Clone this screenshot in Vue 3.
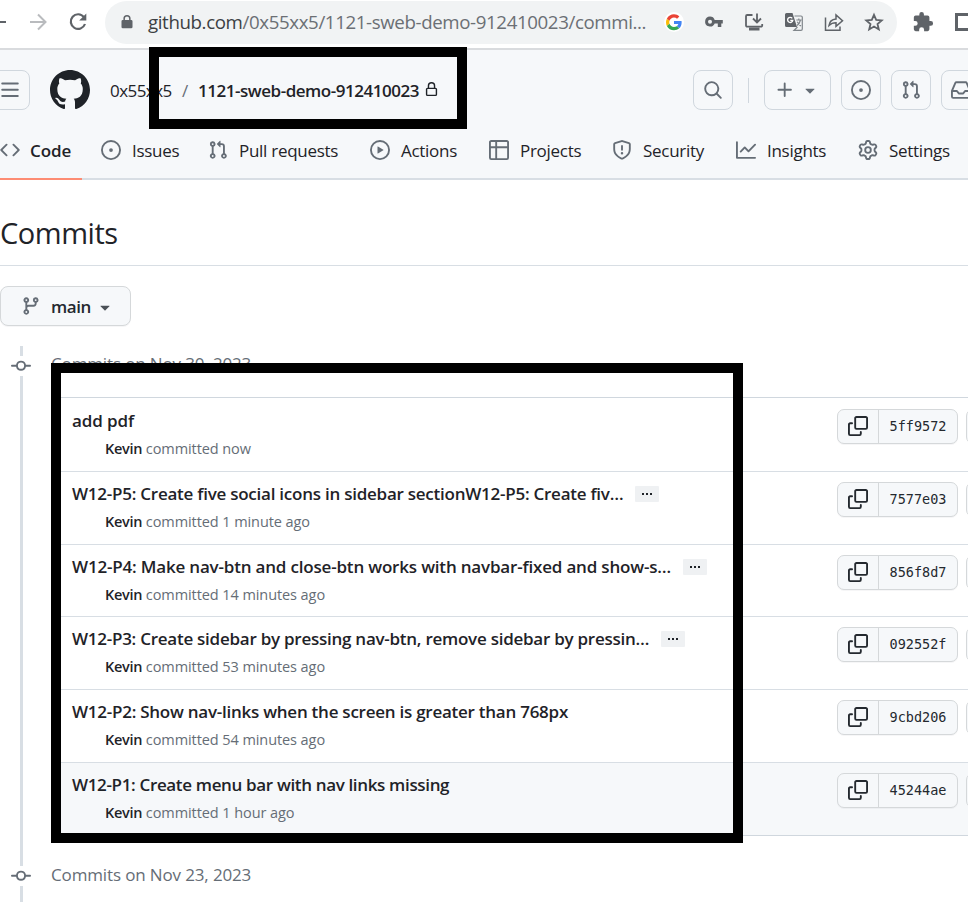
<script setup>
const icons = {
  code: 'm11.28 3.22 4.25 4.25a.75.75 0 0 1 0 1.06l-4.25 4.25a.749.749 0 0 1-1.275-.326.749.749 0 0 1 .215-.734L13.94 8l-3.72-3.72a.749.749 0 0 1 .326-1.275.749.749 0 0 1 .734.215Zm-6.56 0a.751.751 0 0 1 1.042.018.751.751 0 0 1 .018 1.042L2.06 8l3.72 3.72a.749.749 0 0 1-.326 1.275.749.749 0 0 1-.734-.215L.47 8.53a.75.75 0 0 1 0-1.06Z',
  issue: 'M8 9.5a1.5 1.5 0 1 0 0-3 1.5 1.5 0 0 0 0 3Z M8 0a8 8 0 1 1 0 16A8 8 0 0 1 8 0ZM1.5 8a6.5 6.5 0 1 0 13 0 6.5 6.5 0 0 0-13 0Z',
  pull: 'M1.5 3.25a2.25 2.25 0 1 1 3 2.122v5.256a2.251 2.251 0 1 1-1.5 0V5.372A2.25 2.25 0 0 1 1.5 3.25Zm5.677-.177L9.573.677A.25.25 0 0 1 10 .854V2.5h1A2.5 2.5 0 0 1 13.5 5v5.628a2.251 2.251 0 1 1-1.5 0V5a1 1 0 0 0-1-1h-1v1.646a.25.25 0 0 1-.427.177L7.177 3.427a.25.25 0 0 1 0-.354ZM3.75 2.5a.75.75 0 1 0 0 1.5.75.75 0 0 0 0-1.5Zm0 9.5a.75.75 0 1 0 0 1.5.75.75 0 0 0 0-1.5Zm8.25.75a.75.75 0 1 0 1.5 0 .75.75 0 0 0-1.5 0Z',
  play: 'M8 0a8 8 0 1 1 0 16A8 8 0 0 1 8 0ZM1.5 8a6.5 6.5 0 1 0 13 0 6.5 6.5 0 0 0-13 0Zm4.879-2.773 4.264 2.559a.25.25 0 0 1 0 .428l-4.264 2.559A.25.25 0 0 1 6 10.559V5.442a.25.25 0 0 1 .379-.215Z',
  table: 'M0 1.75C0 .784.784 0 1.75 0h12.5C15.216 0 16 .784 16 1.75v12.5A1.75 1.75 0 0 1 14.25 16H1.75A1.75 1.75 0 0 1 0 14.25ZM6.5 6.5v8h7.75a.25.25 0 0 0 .25-.25V6.5Zm8-1.5V1.75a.25.25 0 0 0-.25-.25H6.5V5Zm-13 1.5v7.75c0 .138.112.25.25.25H5v-8ZM5 5V1.5H1.75a.25.25 0 0 0-.25.25V5Z',
  shield: 'M7.467.133a1.748 1.748 0 0 1 1.066 0l5.25 1.68A1.75 1.75 0 0 1 15 3.48V7c0 1.566-.32 3.182-1.303 4.682-.983 1.498-2.585 2.813-5.032 3.855a1.697 1.697 0 0 1-1.33 0c-2.447-1.042-4.049-2.357-5.032-3.855C1.32 10.182 1 8.566 1 7V3.48a1.75 1.75 0 0 1 1.217-1.667Zm.61 1.429a.25.25 0 0 0-.153 0l-5.25 1.68a.25.25 0 0 0-.174.238V7c0 1.358.275 2.666 1.057 3.86.784 1.194 2.121 2.34 4.366 3.297a.196.196 0 0 0 .154 0c2.245-.956 3.582-2.104 4.366-3.298C13.225 9.666 13.5 8.36 13.5 7V3.48a.251.251 0 0 0-.174-.237l-5.25-1.68ZM8.75 4.75v3a.75.75 0 0 1-1.5 0v-3a.75.75 0 0 1 1.5 0ZM9 10.5a1 1 0 1 1-2 0 1 1 0 0 1 2 0Z',
  graph: 'M1.5 1.75V13.5h13.75a.75.75 0 0 1 0 1.5H.75a.75.75 0 0 1-.75-.75V1.75a.75.75 0 0 1 1.5 0Zm14.28 2.53-5.25 5.25a.75.75 0 0 1-1.06 0L7 7.06 4.28 9.78a.751.751 0 0 1-1.042-.018.751.751 0 0 1-.018-1.042l3.25-3.25a.75.75 0 0 1 1.06 0L10 7.94l4.72-4.72a.751.751 0 0 1 1.042.018.751.751 0 0 1 .018 1.042Z',
  gear: 'M8 0a8.2 8.2 0 0 1 .701.031C9.444.095 9.99.645 10.16 1.29l.288 1.107c.018.066.079.158.212.224.231.114.454.243.668.386.123.082.233.09.299.071l1.103-.303c.644-.176 1.392.021 1.82.63.27.385.506.792.704 1.218.315.675.111 1.422-.364 1.891l-.814.806c-.049.048-.098.147-.088.294.016.257.016.515 0 .772-.01.147.038.246.088.294l.814.806c.475.469.679 1.216.364 1.891a7.977 7.977 0 0 1-.704 1.217c-.428.61-1.176.807-1.82.63l-1.102-.302c-.067-.019-.177-.011-.3.071a5.909 5.909 0 0 1-.668.386c-.133.066-.194.158-.211.224l-.29 1.106c-.168.646-.715 1.196-1.458 1.26a8.006 8.006 0 0 1-1.402 0c-.743-.064-1.289-.614-1.458-1.26l-.289-1.106c-.018-.066-.079-.158-.212-.224a5.738 5.738 0 0 1-.668-.386c-.123-.082-.233-.09-.299-.071l-1.103.303c-.644.176-1.392-.021-1.82-.63a8.12 8.12 0 0 1-.704-1.218c-.315-.675-.111-1.422.363-1.891l.815-.806c.05-.048.098-.147.088-.294a6.214 6.214 0 0 1 0-.772c.01-.147-.038-.246-.088-.294l-.815-.806C.635 6.045.431 5.298.746 4.623a7.92 7.92 0 0 1 .704-1.217c.428-.61 1.176-.807 1.82-.63l1.102.302c.067.019.177.011.3-.071.214-.143.437-.272.668-.386.133-.066.194-.158.211-.224l.29-1.106C6.009.645 6.556.095 7.299.03 7.53.01 7.764 0 8 0Zm-.571 1.525c-.036.003-.108.036-.137.146l-.289 1.105c-.147.561-.549.967-.998 1.189-.173.086-.34.183-.5.29-.417.278-.97.423-1.529.27l-1.103-.303c-.109-.03-.175.016-.195.045-.22.312-.412.644-.573.99-.014.031-.021.11.059.19l.815.806c.411.406.562.957.53 1.456a4.709 4.709 0 0 0 0 .582c.032.499-.119 1.05-.53 1.456l-.815.806c-.081.08-.073.159-.059.19.162.346.353.677.573.989.02.03.085.076.195.046l1.102-.303c.56-.153 1.113-.008 1.53.27.161.107.328.204.501.29.447.222.85.629.997 1.189l.289 1.105c.029.109.101.143.137.146a6.6 6.6 0 0 0 1.142 0c.036-.003.108-.036.137-.146l.289-1.105c.147-.561.549-.967.998-1.189.173-.086.34-.183.5-.29.417-.278.97-.423 1.529-.27l1.103.303c.109.029.175-.016.195-.045.22-.313.411-.644.573-.99.014-.031.021-.11-.059-.19l-.815-.806c-.411-.406-.562-.957-.53-1.456a4.709 4.709 0 0 0 0-.582c-.032-.499.119-1.05.53-1.456l.815-.806c.081-.08.073-.159.059-.19a6.464 6.464 0 0 0-.573-.989c-.02-.03-.085-.076-.195-.046l-1.102.303c-.56.153-1.113.008-1.53-.27a4.44 4.44 0 0 0-.501-.29c-.447-.222-.85-.629-.997-1.189l-.289-1.105c-.029-.11-.101-.143-.137-.146a6.6 6.6 0 0 0-1.142 0ZM11 8a3 3 0 1 1-6 0 3 3 0 0 1 6 0ZM9.5 8a1.5 1.5 0 1 0-3.001.001A1.5 1.5 0 0 0 9.5 8Z',
  search: 'M10.68 11.74a6 6 0 0 1-7.922-8.982 6 6 0 0 1 8.982 7.922l3.04 3.04a.749.749 0 0 1-.326 1.275.749.749 0 0 1-.734-.215ZM11.5 7a4.499 4.499 0 1 0-8.997 0A4.499 4.499 0 0 0 11.5 7Z',
  plus: 'M7.75 2a.75.75 0 0 1 .75.75V7h4.25a.75.75 0 0 1 0 1.5H8.5v4.25a.75.75 0 0 1-1.5 0V8.5H2.75a.75.75 0 0 1 0-1.5H7V2.75A.75.75 0 0 1 7.75 2Z',
  caret: 'm4.427 7.427 3.396 3.396a.25.25 0 0 0 .354 0l3.396-3.396A.25.25 0 0 0 11.396 7H4.604a.25.25 0 0 0-.177.427Z',
  inbox: 'M2.8 2.06A1.75 1.75 0 0 1 4.41 1h7.18c.7 0 1.333.417 1.61 1.06l2.74 6.395c.04.093.06.194.06.295v4.5A1.75 1.75 0 0 1 14.25 15H1.75A1.75 1.75 0 0 1 0 13.25v-4.5c0-.101.02-.202.06-.295Zm1.61.44a.25.25 0 0 0-.23.152L1.887 8H4.75a.75.75 0 0 1 .6.3L6.625 10h2.75l1.275-1.7a.75.75 0 0 1 .6-.3h2.863L11.82 2.652a.25.25 0 0 0-.23-.152Zm10.09 7h-2.875l-1.275 1.7a.75.75 0 0 1-.6.3h-3.5a.75.75 0 0 1-.6-.3L4.375 9.5H1.5v3.75c0 .138.112.25.25.25h12.5a.25.25 0 0 0 .25-.25Z',
  menu: 'M1 2.75A.75.75 0 0 1 1.75 2h12.5a.75.75 0 0 1 0 1.5H1.75A.75.75 0 0 1 1 2.75Zm0 5A.75.75 0 0 1 1.75 7h12.5a.75.75 0 0 1 0 1.5H1.75A.75.75 0 0 1 1 7.75ZM1.75 12h12.5a.75.75 0 0 1 0 1.5H1.75a.75.75 0 0 1 0-1.5Z',
  lock: 'M4 4a4 4 0 0 1 8 0v2h.25c.966 0 1.75.784 1.75 1.75v5.5A1.75 1.75 0 0 1 12.25 15h-8.5A1.75 1.75 0 0 1 2 13.25v-5.5C2 6.784 2.784 6 3.75 6H4Zm8.25 3.5h-8.5a.25.25 0 0 0-.25.25v5.5c0 .138.112.25.25.25h8.5a.25.25 0 0 0 .25-.25v-5.5a.25.25 0 0 0-.25-.25ZM10.5 6V4a2.5 2.5 0 1 0-5 0v2Z',
  mark: 'M8 0c4.42 0 8 3.58 8 8a8.013 8.013 0 0 1-5.45 7.59c-.4.08-.55-.17-.55-.38 0-.27.01-1.13.01-2.2 0-.75-.25-1.23-.54-1.48 1.78-.2 3.65-.88 3.65-3.95 0-.88-.31-1.59-.82-2.15.08-.2.36-1.02-.08-2.12 0 0-.67-.22-2.2.82-.64-.18-1.32-.27-2-.27-.68 0-1.36.09-2 .27-1.53-1.03-2.2-.82-2.2-.82-.44 1.1-.16 1.92-.08 2.12-.51.56-.82 1.28-.82 2.15 0 3.06 1.86 3.75 3.64 3.95-.23.2-.44.55-.51 1.07-.46.21-1.61.55-2.33-.66-.15-.24-.6-.83-1.23-.82-.67.01-.27.38.01.53.34.19.73.9.82 1.13.16.45.68 1.31 2.69.94 0 .67.01 1.3.01 1.49 0 .21-.15.45-.55.38A7.995 7.995 0 0 1 0 8c0-4.42 3.58-8 8-8Z',
  branch: 'M9.5 3.25a2.25 2.25 0 1 1 3 2.122V6A2.5 2.5 0 0 1 10 8.5H6a1 1 0 0 0-1 1v1.128a2.251 2.251 0 1 1-1.5 0V5.372a2.25 2.25 0 1 1 1.5 0v1.836A2.493 2.493 0 0 1 6 7h4a1 1 0 0 0 1-1v-.628A2.25 2.25 0 0 1 9.5 3.25Zm-6 0a.75.75 0 1 0 1.5 0 .75.75 0 0 0-1.5 0Zm8.25-.75a.75.75 0 1 0 0 1.5.75.75 0 0 0 0-1.5ZM4.25 12a.75.75 0 1 0 0 1.5.75.75 0 0 0 0-1.5Z',
  commit: 'M11.93 8.5a4.002 4.002 0 0 1-7.86 0H.75a.75.75 0 0 1 0-1.5h3.32a4.002 4.002 0 0 1 7.86 0h3.32a.75.75 0 0 1 0 1.5Zm-1.43-.75a2.5 2.5 0 1 0-5 0 2.5 2.5 0 0 0 5 0Z',
  copy: 'M0 6.75C0 5.784.784 5 1.75 5h1.5a.75.75 0 0 1 0 1.5h-1.5a.25.25 0 0 0-.25.25v7.5c0 .138.112.25.25.25h7.5a.25.25 0 0 0 .25-.25v-1.5a.75.75 0 0 1 1.5 0v1.5A1.75 1.75 0 0 1 9.25 16h-7.5A1.75 1.75 0 0 1 0 14.25Z M5 1.75C5 .784 5.784 0 6.75 0h7.5C15.216 0 16 .784 16 1.75v7.5A1.75 1.75 0 0 1 14.25 11h-7.5A1.75 1.75 0 0 1 5 9.25Zm1.75-.25a.25.25 0 0 0-.25.25v7.5c0 .138.112.25.25.25h7.5a.25.25 0 0 0 .25-.25v-7.5a.25.25 0 0 0-.25-.25Z',
}

const tabs = [
  { label: 'Code', icon: 'code', active: true },
  { label: 'Issues', icon: 'issue' },
  { label: 'Pull requests', icon: 'pull' },
  { label: 'Actions', icon: 'play' },
  { label: 'Projects', icon: 'table' },
  { label: 'Security', icon: 'shield' },
  { label: 'Insights', icon: 'graph' },
  { label: 'Settings', icon: 'gear' },
]

// tracking: letter spacing of the title, in px
const commits = [
  { title: 'add pdf', when: 'now', sha: '5ff9572', tracking: -0.1 },
  { title: 'W12-P5: Create five social icons in sidebar sectionW12-P5: Create fiv…', when: '1 minute ago', sha: '7577e03', more: true, tracking: -0.245 },
  { title: 'W12-P4: Make nav-btn and close-btn works with navbar-fixed and show-s…', when: '14 minutes ago', sha: '856f8d7', more: true, tracking: -0.185 },
  { title: 'W12-P3: Create sidebar by pressing nav-btn, remove sidebar by pressin…', when: '53 minutes ago', sha: '092552f', more: true, tracking: -0.255 },
  { title: 'W12-P2: Show nav-links when the screen is greater than 768px', when: '54 minutes ago', sha: '9cbd206', tracking: -0.25 },
  { title: 'W12-P1: Create menu bar with nav links missing', when: '1 hour ago', sha: '45244ae', hover: true, tracking: -0.345 },
]
</script>

<template>
  <div class="window">
    <div class="toolbar">
      <div class="nav-buttons">
        <svg class="back" width="20" height="20" viewBox="0 0 20 20"><path d="M2 10H18" /></svg>
        <svg class="forward" width="18" height="18" viewBox="0 0 18 18"><path d="M1 9H16M9 1.5 16.5 9 9 16.5" /></svg>
        <svg class="reload" width="20" height="20" viewBox="0 0 20 20"><path class="arc" d="M15.9 5.1A7.3 7.3 0 1 0 17 12" /><path d="M18.3 1.5V8.6H11.2Z" fill="#5f6368" /></svg>
      </div>
      <div class="address">
        <svg class="padlock" width="12" height="16" viewBox="0 0 12 16"><path fill="#5f6368" d="M6 1a3.6 3.6 0 0 0-3.6 3.6V6H1.8A1.3 1.3 0 0 0 .5 7.3V13a1.3 1.3 0 0 0 1.3 1.3h8.4A1.3 1.3 0 0 0 11.5 13V7.3A1.3 1.3 0 0 0 10.2 6h-.6V4.6A3.6 3.6 0 0 0 6 1Zm0 1.5a2.1 2.1 0 0 1 2.1 2.1V6H3.9V4.6A2.1 2.1 0 0 1 6 2.5Z" /></svg>
        <span class="url"><b>github.com</b>/0x55xx5/1121-sweb-demo-912410023/commi...</span>
        <div class="actions">
          <svg class="google" width="20" height="20" viewBox="0 0 20 20">
            <circle cx="10" cy="10" r="10" fill="#fff" />
            <g transform="translate(2 2.3) scale(.333)">
              <path fill="#4285F4" d="M46.98 24.55c0-1.57-.15-3.09-.38-4.55H24v9.02h12.94c-.58 2.96-2.26 5.48-4.78 7.18l7.73 6c4.51-4.18 7.09-10.36 7.09-17.65z" />
              <path fill="#FBBC05" d="M10.53 28.59A14.5 14.5 0 0 1 9.77 24c0-1.6.27-3.14.76-4.59l-7.98-6.19A23.9 23.9 0 0 0 0 24c0 3.88.92 7.54 2.56 10.78z" />
              <path fill="#34A853" d="M24 48c6.48 0 11.93-2.13 15.89-5.81l-7.73-6c-2.15 1.45-4.92 2.3-8.16 2.3-6.26 0-11.57-4.22-13.47-9.91l-7.98 6.19C6.51 42.62 14.62 48 24 48z" />
              <path fill="#EA4335" d="M24 9.5c3.54 0 6.71 1.22 9.21 3.6l6.85-6.85C35.9 2.38 30.47 0 24 0 14.62 0 6.51 5.38 2.56 13.22l7.98 6.19C12.43 13.72 17.74 9.5 24 9.5z" />
            </g>
          </svg>
          <svg width="20" height="20" viewBox="0 0 20 20"><path fill="#5f6368" fill-rule="evenodd" d="M6 4.5a5 5 0 0 1 4.7 3.4H18.8V11.5H17.3V15H13.8V11.5H10.7A5 5 0 1 1 6 4.5ZM6 7.7a2 2 0 1 0 0 4 2 2 0 0 0 0-4Z" /></svg>
          <svg class="line" width="20" height="20" viewBox="0 0 20 20"><path d="M8.5 3H3.2A1.2 1.2 0 0 0 2 4.2V13.5A1.2 1.2 0 0 0 3.2 14.7H17A1.2 1.2 0 0 0 18.2 13.5V12M13 1.5V10M9 6.5 13 10.5 17 6.5" /><path class="thick" d="M5 17H15.5" /></svg>
          <svg width="20" height="20" viewBox="0 0 20 20"><path fill="#5f6368" d="M2.5 1H8.5L13 15H2.5A1.5 1.5 0 0 1 1 13.5v-11A1.5 1.5 0 0 1 2.5 1Z" /><path fill="none" stroke="#80868b" stroke-width="1.2" d="M10.5 4H17a1.3 1.3 0 0 1 1.3 1.3V17A1.3 1.3 0 0 1 17 18.3H10L13.5 15M12.3 8H17.5M14.8 6.5V8M16.5 8Q15.5 12 13 13.5M13.3 9.8Q14.5 12.5 17 14" /><path fill="none" stroke="#fff" stroke-width="1.3" d="M8.3 6.3A2.6 2.6 0 1 0 8.8 8.3H6.3" /></svg>
          <svg class="line" width="20" height="20" viewBox="0 0 20 20"><path class="thin" d="M1.5 5.5V18.3H16V14.5M5 13.5C5.5 9.5 8 7.3 12 7V3L18.5 8.8 12 14.3V10.8C9 10.8 7 11.5 5 13.5Z" /></svg>
          <svg class="line" width="20" height="20" viewBox="0 0 20 20"><path d="M10 2.8 12.2 7.9 17.7 8.4 13.5 12 14.8 17.4 10 14.5 5.2 17.4 6.5 12 2.3 8.4 7.8 7.9Z" /></svg>
        </div>
      </div>
      <svg class="puzzle" width="22" height="22" viewBox="0 0 24 24"><path fill="#5f6368" d="M20.5 11H19V7a2 2 0 0 0-2-2h-4V3.5a2.5 2.5 0 0 0-5 0V5H4a2 2 0 0 0-2 2v3.8h1.5a2.7 2.7 0 0 1 0 5.4H2V20a2 2 0 0 0 2 2h3.8v-1.5a2.7 2.7 0 0 1 5.4 0V22H17a2 2 0 0 0 2-2v-4h1.5a2.5 2.5 0 0 0 0-5Z" /></svg>
      <div class="side-panel"></div>
    </div>

    <header class="header">
      <div class="crumbs-row">
        <div class="box-btn menu"><svg class="oct" viewBox="0 0 16 16"><path :d="icons.menu" /></svg></div>
        <svg class="mark" viewBox="0 0 16 16"><path :d="icons.mark" /></svg>
        <span class="owner">0x55xx5</span>
        <span class="slash">/</span>
        <span class="repo">1121-sweb-demo-912410023</span>
        <svg class="lock" viewBox="0 0 16 16"><path :d="icons.lock" /></svg>
        <div class="tools">
          <div class="box-btn"><svg class="oct" viewBox="0 0 16 16"><path :d="icons.search" /></svg></div>
          <div class="divider"></div>
          <div class="box-btn wide">
            <svg class="oct" viewBox="0 0 16 16"><path :d="icons.plus" /></svg>
            <svg class="oct" viewBox="0 0 16 16"><path :d="icons.caret" /></svg>
          </div>
          <div class="box-btn"><svg class="oct" viewBox="0 0 16 16"><path :d="icons.issue" /></svg></div>
          <div class="box-btn"><svg class="oct" viewBox="0 0 16 16"><path :d="icons.pull" /></svg></div>
          <div class="box-btn"><svg class="oct" viewBox="0 0 16 16"><path :d="icons.inbox" /></svg></div>
        </div>
      </div>
      <nav class="tabs">
        <a v-for="t in tabs" :key="t.label" class="tab" :class="{ active: t.active }">
          <svg class="oct" viewBox="0 0 16 16"><path :d="icons[t.icon]" /></svg>
          <span>{{ t.label }}</span>
        </a>
      </nav>
    </header>

    <main>
      <h1>Commits</h1>
      <button class="branch">
        <svg class="oct" viewBox="0 0 16 16"><path :d="icons.branch" /></svg>
        <span>main</span>
        <svg class="oct caret" viewBox="0 0 16 16"><path :d="icons.caret" /></svg>
      </button>

      <div class="timeline">
        <div class="rail">
          <i class="seg"></i>
          <svg class="oct" viewBox="0 0 16 16"><path :d="icons.commit" /></svg>
          <i class="seg long"></i>
          <svg class="oct" viewBox="0 0 16 16"><path :d="icons.commit" /></svg>
          <i class="seg end"></i>
        </div>
        <div class="days">
          <h2>Commits on Nov 30, 2023</h2>
          <ol class="commits">
            <li v-for="c in commits" :key="c.sha" class="commit" :class="{ hover: c.hover }">
              <div class="info">
                <p class="title"><span :style="{ letterSpacing: c.tracking + 'px' }">{{ c.title }}</span><em v-if="c.more" class="more"><i></i><i></i><i></i></em></p>
                <p class="meta"><b>Kevin</b> committed {{ c.when }}</p>
              </div>
              <div class="hash">
                <span class="copy"><svg class="oct" viewBox="0 0 16 16"><path :d="icons.copy" /></svg></span>
                <code>{{ c.sha }}</code>
              </div>
              <div class="browse"></div>
            </li>
          </ol>
          <h2>Commits on Nov 23, 2023</h2>
        </div>
      </div>
    </main>

    <div class="mark-box repo-box"></div>
    <div class="mark-box list-box"></div>
  </div>
</template>

<style>
body { background: #fff; overflow: hidden; }
</style>

<style scoped>
* { box-sizing: border-box; }
.window {
  position: relative;
  width: 968px;
  height: 902px;
  overflow: hidden;
  background: #fff;
  color: #1f2328;
  font-family: "Open Sans", "Noto Sans", sans-serif;
  white-space: nowrap;
}
svg { display: block; flex: none; }
.oct { width: 20px; height: 20px; fill: #656d76; }

.toolbar {
  display: flex;
  align-items: center;
  height: 50px;
  padding-bottom: 4px;
  border-bottom: 2px solid #d9dbde;
}
.nav-buttons { display: flex; align-items: center; width: 105px; flex: none; }
.back { margin-left: -12px; stroke: #5f6368; stroke-width: 2; }
.forward { margin-left: 21px; fill: none; stroke: #b9bbbe; stroke-width: 2; }
.reload { margin-left: 21px; }
.arc { fill: none; stroke: #5f6368; stroke-width: 2.2; }
.address {
  display: flex;
  align-items: center;
  width: 792px;
  height: 43px;
  flex: none;
  padding: 0 13px 0 16px;
  border-radius: 22px;
  background: #f1f3f4;
}
.url { flex: none; margin: -2px 0 0 15px; width: 516px; font-size: 18.7px; letter-spacing: -0.38px; color: #6b6f74; }
.url b { font-weight: 400; color: #3c4043; }
.actions { display: flex; gap: 20px; }
.line { fill: none; stroke: #5f6368; stroke-width: 1.8; }
.thin { stroke-width: 1.5; }
.thick { stroke-width: 3; }
.puzzle { margin-left: 15px; }
.side-panel { width: 20px; height: 18px; flex: none; margin-left: 21px; border: 3px solid #5f6368; }

.header { height: 130px; background: #f6f8fa; border-bottom: 2px solid #d8dee4; }
.crumbs-row { display: flex; align-items: center; height: 80px; }
.crumbs-row > * { flex: none; }
.box-btn {
  display: flex;
  align-items: center;
  justify-content: center;
  width: 40px;
  height: 40px;
  flex: none;
  border: 1px solid #d0d7de;
  border-radius: 8px;
}
.menu { margin-left: -10px; }
.mark { width: 40px; height: 40px; margin-left: 20px; fill: #1f2328; }
.owner { width: 72px; margin-left: 20px; font-size: 17px; letter-spacing: -0.55px; }
.slash { width: 16px; font-size: 17px; color: #656d76; }
.repo { width: 227px; font-size: 17px; font-weight: 600; letter-spacing: -0.47px; }
.lock { width: 15px; height: 15px; margin-top: -2px; fill: #1f2328; margin-left: -1px; }
.tools { display: flex; align-items: center; gap: 10px; margin-left: 254px; }
.tools .divider { width: 1px; height: 25px; margin: 0 5px; background: #d0d7de; }
.tools .wide { width: 67px; gap: 5px; }

.tabs {
  display: grid;
  grid-template-columns: 101px 107px 162px 119px 123px 124px 122px 110px;
  height: 50px;
}
.tab { display: flex; height: 50px; padding-top: 10px; gap: 11px; font-size: 17px; letter-spacing: -0.28px; line-height: 22px; }
.tab.active { width: 82px; gap: 10px; font-weight: 600; letter-spacing: -0.1px; border-bottom: 2px solid #fd8c73; }

h1 { height: 86px; margin: 0; padding-top: 31px; border-bottom: 1px solid #d8dee4; font-size: 29px; font-weight: 400; letter-spacing: -0.45px; line-height: 44px; }
.branch {
  display: flex;
  align-items: center;
  width: 131px;
  height: 40px;
  margin: 20px 0;
  padding: 0 0 0 20px;
  border: 1px solid #d5d8da;
  border-radius: 8px;
  background: #f6f8fa;
  color: #24292f;
  font: 600 17px "Open Sans", sans-serif;
  box-shadow: 0 1px 0 rgba(31, 35, 40, 0.04);
}
.branch span { width: 39px; margin-left: 10px; letter-spacing: -0.4px; }
.branch .caret { margin: 1px 0 0 5px; fill: #4b5157; }

.timeline { display: flex; }
.rail { display: flex; flex-direction: column; align-items: center; width: 51px; flex: none; padding-right: 9px; }
.seg { width: 3px; height: 10px; margin-left: 1px; background: #d8dee4; }
.long { height: 490px; }
.end { height: 20px; }
.days { flex: none; width: 940px; }
h2 { height: 36px; margin: 0; font-size: 17px; font-weight: 400; line-height: 36px; letter-spacing: -0.14px; color: #656d76; }
.commits { list-style: none; margin: 15px 0 21px; padding: 0; border: 1px solid #d0d7de; border-radius: 8px; }
.commit { display: flex; height: 72.8px; padding: 11px 0 0 20px; }
.commit + .commit { border-top: 1px solid #d8dee4; padding-top: 10px; }
.hover { background: #f6f8fa; }
.info { width: 765px; flex: none; }
p { margin: 0; }
.title { display: flex; align-items: center; height: 23.2px; font-size: 17px; font-weight: 600; }
.more { display: flex; align-items: center; justify-content: center; gap: 2px; width: 24px; height: 16px; margin: 1px 0 0 12px; background: #eff1f3; border-radius: 1px; }
.more i { width: 2px; height: 2px; background: #1f2328; }
.meta { margin-top: 6.8px; padding-left: 33px; font-size: 14.5px; letter-spacing: -0.08px; line-height: 20px; color: #656d76; }
.meta b { font-weight: 600; letter-spacing: -0.3px; color: #1f2328; }
.hash { display: flex; width: 121px; height: 35px; flex: none; border: 1px solid #d5d8da; border-radius: 7px; background: #f6f8fa; box-shadow: 0 1px 0 rgba(31, 35, 40, 0.04); }
.copy { display: flex; align-items: center; justify-content: center; width: 41px; border-right: 1px solid #d5d8da; }
.copy .oct { margin-top: -1px; fill: #24292f; }
.hash code { width: 78px; text-align: center; font: 13.5px/33px "DejaVu Sans Mono", monospace; color: #24292f; }
.browse { width: 40px; height: 35px; flex: none; margin-left: 8px; border: 1px solid #d5d8da; border-radius: 7px; background: #f6f8fa; }

.mark-box { position: absolute; border: 10px solid #000; }
.repo-box { left: 149px; top: 47px; width: 318px; height: 82px; }
.list-box { left: 51px; top: 363px; width: 692px; height: 480px; }
</style>
